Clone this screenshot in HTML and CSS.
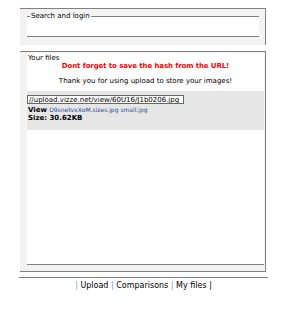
FILE: index.html
```html
<!DOCTYPE html>
<html lang="en">
<head>
    <meta charset="UTF-8">
    <title>Upload - Your files</title>
    <link rel="stylesheet" href="styles.css">
</head>
<body>
    <div class="wrap">
        <div class="box box-login">
            <fieldset class="login">
                <legend>Search and login</legend>
            </fieldset>
        </div>

        <div class="box box-files">
            <div class="files">
                <div class="files-title">Your files</div>
                <p class="warn">Dont forget to save the hash from the URL!</p>
                <p class="thanks">Thank you for using upload to store your images!</p>
                <div class="file">
                    <input type="text" class="file-url" value="//upload.vizze.net/view/60U16/J1b0206.jpg">
                    <div class="file-view"><b>View</b> <a href="#">D9snetvxXoM.sizes.jpg small.jpg</a></div>
                    <div class="file-size">Size: 30.62KB</div>
                </div>
            </div>
        </div>

        <hr class="sep">
        <div class="footer">
            <span class="pipe">|</span> <a href="#">Upload</a>
            <span class="pipe">|</span> <a href="#">Comparisons</a>
            <span class="pipe">|</span> <a href="#">My files</a> |
        </div>
    </div>
</body>
</html>
```

FILE: styles.css
```css
body {
    margin: 0;
    font-family: "DejaVu Sans", Verdana, sans-serif;
    font-size: 7px;
    color: #000;
}
.wrap {
    width: 249px;
    margin: 8px 0 0 19px;
}
.box {
    margin-left: 1px;
    width: 245px;
    background-color: #f3f3f3;
    border-top: 1px solid #808080;
    border-right: 1px solid #808080;
}
.box-login {
    height: 37px;
    padding: 0 6px 0 7px;
    box-sizing: border-box;
    width: 246px;
}
.login {
    margin: 0;
    padding: 0;
    height: 25px;
    box-sizing: border-box;
    background: #fff;
    border: none;
    border-top: 1px solid #808080;
    border-bottom: 1px solid #808080;
    position: relative;
    top: 3px;
}
.login legend {
    margin-left: 3px;
    padding: 0 1px;
    font-size: 7px;
}
.box-files {
    margin-top: 6px;
    border-bottom: 1px solid #808080;
    padding: 1px 1px 6px 7px;
    width: 237px;
}
.files {
    background: #fff;
    height: 211px;
    border-bottom: 1px solid #808080;
}
.files-title {
    padding: 1px 0 0 1px;
    line-height: 8px;
}
.warn {
    margin: 0;
    text-align: center;
    color: #f00;
    font-weight: bold;
    line-height: 9px;
    letter-spacing: -0.1px;
}
.thanks {
    margin: 6px 0 0;
    text-align: center;
    line-height: 9px;
}
.file {
    margin-top: 5px;
    background: #e6e6e6;
    padding: 4px 2px 8px 1px;
}
.file-url {
    display: block;
    width: 157px;
    height: 9px;
    box-sizing: border-box;
    margin: 0 0 0 -1px;
    padding: 0 1px;
    border: 1px solid #666;
    font-family: "DejaVu Sans", Verdana, sans-serif;
    font-size: 7px;
    line-height: 7px;
}
.file-view {
    margin-top: 2px;
    line-height: 8px;
}
.file-view a {
    color: #1a4fa0;
    text-decoration: none;
    font-size: 6px;
}
.file-size {
    font-weight: bold;
    line-height: 8px;
}
.sep {
    margin: 5px 0 0;
    border: none;
    border-top: 1px solid #808080;
    height: 0;
}
.footer {
    margin-top: 3px;
    text-align: center;
    font-size: 8px;
}
.footer a {
    color: #000;
    text-decoration: none;
}
.pipe {
    color: #5aa9e6;
}
```
